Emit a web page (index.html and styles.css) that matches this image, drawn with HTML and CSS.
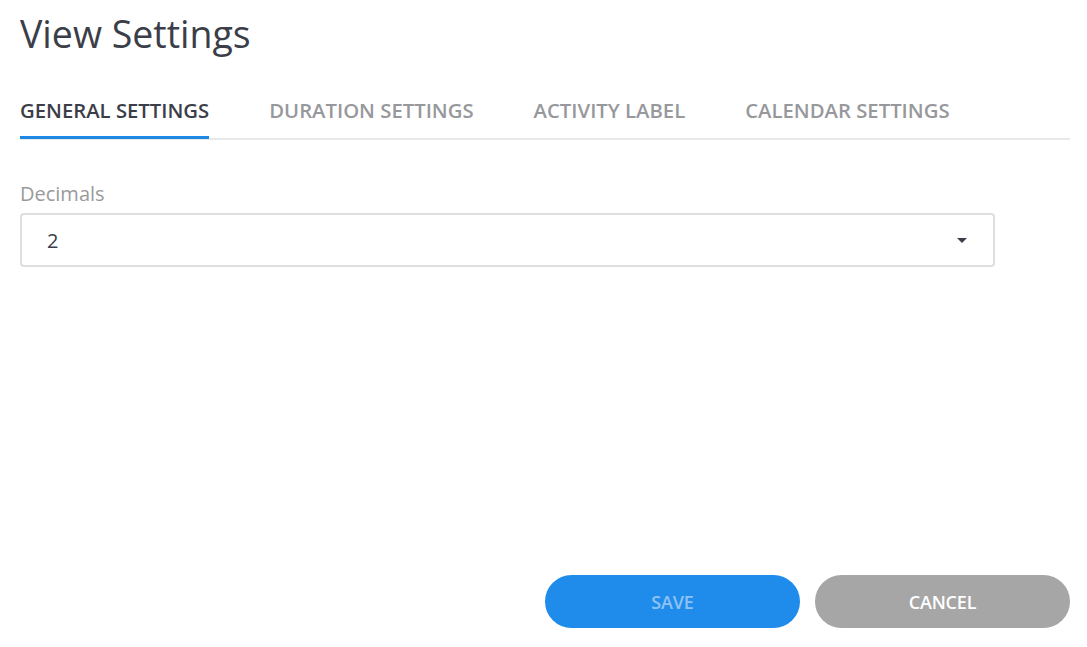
FILE: index.html
```html
<!DOCTYPE html>
<html>
<head>
<meta charset="utf-8">
<link rel="stylesheet" href="styles.css">
</head>
<body>
<div class="page">
  <h1 class="title">View Settings</h1>
  <div class="tabs">
    <div class="tab active">GENERAL SETTINGS</div>
    <div class="tab">DURATION SETTINGS</div>
    <div class="tab">ACTIVITY LABEL</div>
    <div class="tab">CALENDAR SETTINGS</div>
  </div>
  <div class="field">
    <label class="label">Decimals</label>
    <div class="select">
      <span class="value">2</span>
      <span class="caret"></span>
    </div>
  </div>
  <div class="actions">
    <button class="btn save">SAVE</button>
    <button class="btn cancel">CANCEL</button>
  </div>
</div>
</body>
</html>
```

FILE: styles.css
```css
* { box-sizing: border-box; }
html, body { margin: 0; padding: 0; background: #fff; }
body { font-family: "Open Sans", "Noto Sans", sans-serif; }
.page {
  height: 647px;
  display: flex;
  flex-direction: column;
  padding: 0 17px 19px 20px;
}
.title {
  margin: 11px 0 0 0;
  font-size: 37.5px;
  font-weight: 400;
  color: #3b3e48;
  line-height: 46px;
}
.tabs {
  margin-top: 40px;
  display: flex;
  gap: 60px;
  border-bottom: 2px solid #e8e8e8;
}
.tab {
  font-size: 20.3px;
  font-weight: 600;
  color: #97989c;
  padding-bottom: 13px;
  line-height: 26px;
  margin-bottom: -1px;
  border-bottom: 3px solid transparent;
}
.tab.active {
  color: #3b3e48;
  border-bottom-color: #1e88e5;
}
.field {
  margin-top: 41px;
  width: 975px;
}
.label {
  display: block;
  font-size: 20px;
  color: #9a9a9a;
  line-height: 26px;
}
.select {
  margin-top: 6px;
  height: 54px;
  border: 2px solid #dedede;
  border-radius: 4px;
  display: flex;
  align-items: center;
  justify-content: space-between;
  padding: 0 26px 0 25px;
}
.value {
  font-size: 20px;
  color: #3b3e48;
}
.caret {
  width: 0;
  height: 0;
  border-left: 5px solid transparent;
  border-right: 5px solid transparent;
  border-top: 5px solid #3b3e48;
}
.actions {
  margin-top: auto;
  display: flex;
  justify-content: flex-end;
  gap: 15px;
}
.btn {
  width: 255px;
  height: 53px;
  border: none;
  border-radius: 27px;
  font-family: inherit;
  font-size: 18px;
  font-weight: 600;
  letter-spacing: -0.2px;
}
.save { background: #1f8ceb; color: #8ec3f3; }
.cancel { background: #a6a6a6; color: #fff; }
```
